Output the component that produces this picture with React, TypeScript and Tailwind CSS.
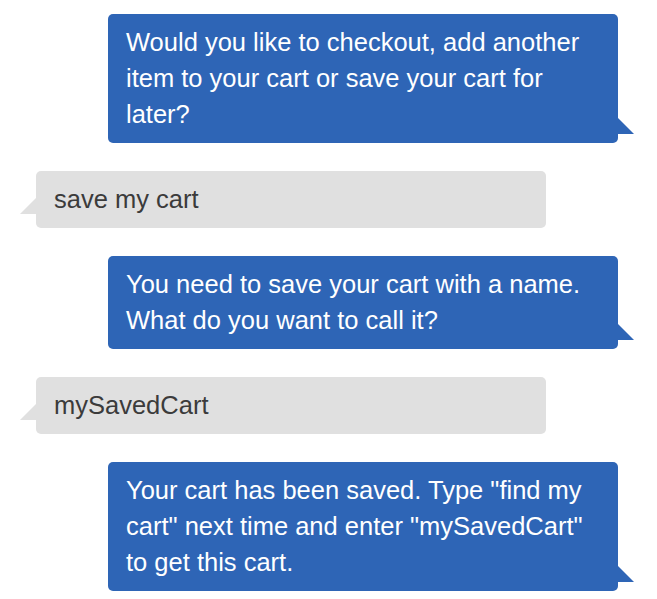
import React from 'react';

type Message = { from: 'bot' | 'user'; text: string };

const messages: Message[] = [
  {
    from: 'bot',
    text: 'Would you like to checkout, add another item to your cart or save your cart for later?',
  },
  { from: 'user', text: 'save my cart' },
  {
    from: 'bot',
    text: 'You need to save your cart with a name. What do you want to call it?',
  },
  { from: 'user', text: 'mySavedCart' },
  {
    from: 'bot',
    text: 'Your cart has been saved. Type "find my cart" next time and enter "mySavedCart" to get this cart.',
  },
];

const Bubble: React.FC<{ msg: Message }> = ({ msg }) => {
  if (msg.from === 'bot') {
    return (
      <div className="relative self-end w-[510px] rounded-[5px] bg-[#2e65b6] px-[18px] pt-[10px] pb-[11px] text-white">
        {msg.text}
        <span className="absolute left-full bottom-[9px] w-0 h-0 border-l-[16px] border-l-[#2e65b6] border-t-[16px] border-t-transparent" />
      </div>
    );
  }
  return (
    <div className="relative self-start w-[510px] rounded-[5px] bg-[#e0e0e0] px-[18px] pt-[10px] pb-[11px] text-[#3b3b3b]">
      {msg.text}
      <span className="absolute right-full bottom-[14px] w-0 h-0 border-r-[16px] border-r-[#e0e0e0] border-t-[16px] border-t-transparent" />
    </div>
  );
};

export default function App() {
  return (
    <div className="min-h-screen bg-white pt-[14px] pl-[36px] pr-[39px] font-['Liberation_Sans',Arial,sans-serif] text-[25.5px] leading-[36px]">
      <div className="flex flex-col gap-[28px]">
        {messages.map((m, i) => (
          <Bubble key={i} msg={m} />
        ))}
      </div>
    </div>
  );
}
